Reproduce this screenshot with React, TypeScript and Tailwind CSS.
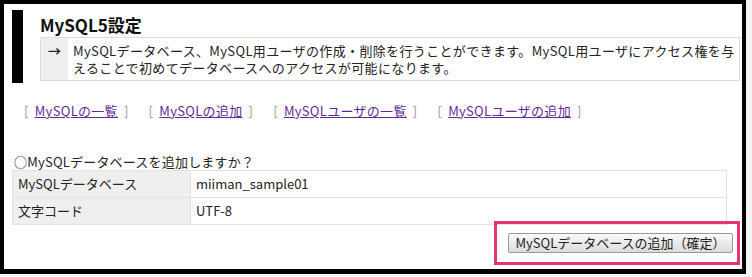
const links = ["MySQLの一覧", "MySQLの追加", "MySQLユーザの一覧", "MySQLユーザの追加"];

export default function App() {
  return (
    <div className="h-[277px] w-[752px] bg-[#f4f4f4] font-['Noto_Sans_CJK_JP',sans-serif] text-[#222]">
      <div className="flex h-[274px] w-[746px] flex-col border-x-4 border-b-[5px] border-t-4 border-black bg-white">
        {/* heading */}
        <div className="mt-[6px] flex h-[73px] pl-[8px]">
          <div className="w-[11px] shrink-0 bg-black" />
          <div className="ml-[17px] flex flex-1 flex-col">
            <div className="mt-[4px] text-[17px] font-bold leading-[22px] text-[#111]">MySQL5設定</div>
            <div className="mt-[1px] mr-[2px] flex h-[44px] border border-[#dcdcdc]">
              <div className="flex w-[27px] shrink-0 justify-center bg-[#efefef] pt-[4px] text-[13px] font-bold leading-[17px]">→</div>
              <p className="pl-[5px] pt-[4px] text-[13px] leading-[17px] tracking-[0.35px]">
                MySQLデータベース、MySQL用ユーザの作成・削除を行うことができます。MySQL用ユーザにアクセス権を与えることで初めてデータベースへのアクセスが可能になります。
              </p>
            </div>
          </div>
        </div>

        {/* links */}
        <div className="mt-[19px] flex gap-[20px] pl-[20px] text-[13px] leading-[18px] tracking-[0.3px]">
          {links.map((l) => (
            <span className="flex gap-[6px] text-[#999]" key={l}>
              <span>[</span>
              <a className="text-[#5f2b93] underline" href="#">{l}</a>
              <span>]</span>
            </span>
          ))}
        </div>

        {/* form */}
        <div className="mt-[33px] pl-[10px] text-[13px] leading-[17px] tracking-[0.2px]">○MySQLデータベースを追加しますか？</div>
        <table className="ml-[8px] w-[715px] border-collapse text-[13px]">
          <tbody>
            <tr className="h-[27px]">
              <td className="w-[178px] border border-[#e2e2e2] bg-[#efefef] pl-[5px]">MySQLデータベース</td>
              <td className="border border-[#e2e2e2] pl-[5px]">miiman_sample01</td>
            </tr>
            <tr className="h-[27px]">
              <td className="border border-[#e2e2e2] bg-[#efefef] pl-[5px]">文字コード</td>
              <td className="border border-[#e2e2e2] pl-[5px]">UTF-8</td>
            </tr>
          </tbody>
        </table>

        <div className="flex justify-end pr-[2px]">
          <div className="-mt-[4px] flex h-[44px] w-[246px] items-center justify-end border-[3px] border-[#ea336f] pr-[4px]">
            <button className="h-[20px] w-[225px] rounded-[2px] border border-[#999] bg-gradient-to-b from-[#fafafa] to-[#dcdcdc] text-[13px] leading-[18px] text-[#222]">
              MySQLデータベースの追加（確定）
            </button>
          </div>
        </div>
      </div>
    </div>
  );
}
